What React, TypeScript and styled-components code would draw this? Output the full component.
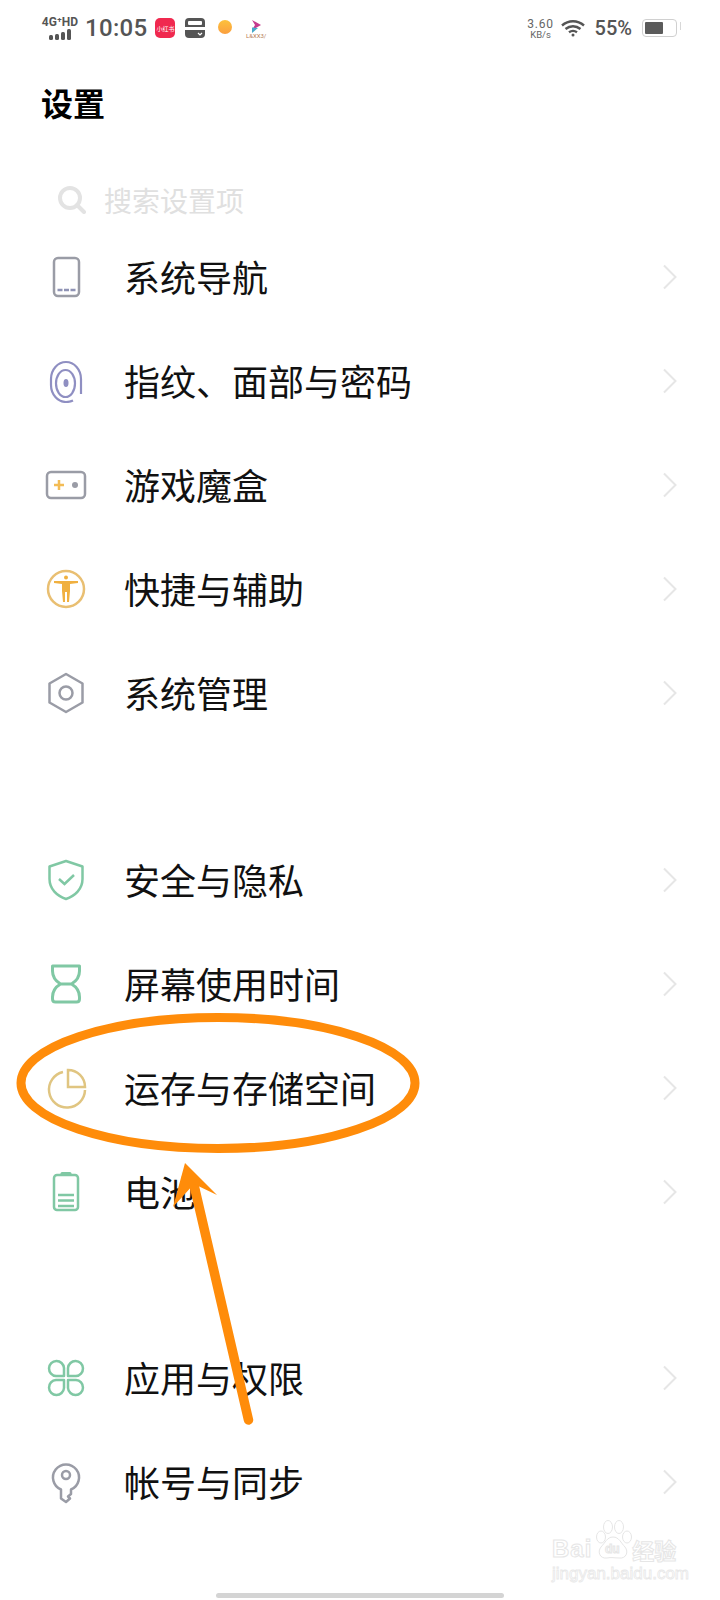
import { FC, ReactNode } from 'react'
import styled, { createGlobalStyle } from 'styled-components'

const GlobalStyle = createGlobalStyle`
  html, body {
    margin: 0;
    padding: 0;
    background: #fff;
  }
  body {
    font-family: "Noto Sans CJK SC", Roboto, sans-serif;
  }
`

const Page = styled.div`
  position: relative;
  width: 720px;
  height: 1600px;
  overflow: hidden;
  background: #fff;
  display: flex;
  flex-direction: column;
`

const StatusBar = styled.div`
  height: 56px;
  padding: 0 43px 0 42px;
  display: flex;
  align-items: center;
  justify-content: space-between;
  font-family: Roboto, sans-serif;
  color: #555;
`

const StatusGroup = styled.div<{ $gap: number }>`
  display: flex;
  align-items: center;
  gap: ${(p) => p.$gap}px;
`

const Network = styled.div`
  width: 36px;
  display: flex;
  flex-direction: column;
  align-items: flex-end;
  gap: 1px;
`

const NetworkLabel = styled.span`
  font-size: 12px;
  line-height: 11px;
  font-weight: 700;
  white-space: nowrap;
`

const SignalBars = styled.svg`
  margin-right: 5px;
  fill: #555;
`

const Clock = styled.span`
  font-size: 24px;
  line-height: 28px;
  font-weight: 500;
  letter-spacing: 0.3px;
  margin-right: 1px;
`

const RedBook = styled.div`
  width: 20px;
  height: 20px;
  margin-right: 3px;
  border-radius: 5px;
  background: #f0294f;
  color: #fff;
  font-size: 6px;
  display: flex;
  align-items: center;
  justify-content: center;
  white-space: nowrap;
  font-family: "Noto Sans CJK SC", sans-serif;
`

const Speed = styled.div`
  display: flex;
  flex-direction: column;
  align-items: center;
  width: 26px;
  margin-right: -3px;
  color: #666;
`

const SpeedValue = styled.span`
  font-size: 12px;
  line-height: 12px;
  letter-spacing: 0.8px;
`

const SpeedUnit = styled.span`
  font-size: 9.5px;
  line-height: 9px;
`

const Percent = styled.span`
  font-size: 20px;
  line-height: 24px;
  font-weight: 500;
`

const BatteryShell = styled.div`
  position: relative;
  width: 29px;
  height: 12px;
  padding: 2px;
  border: 1.5px solid #d0d0d0;
  border-radius: 4px;
  display: flex;

  &::after {
    content: '';
    position: absolute;
    right: -5px;
    top: 2px;
    width: 1.5px;
    height: 8px;
    background: #d8d8d8;
  }
`

const BatteryLevel = styled.div`
  width: 62%;
  background: #5b5b5b;
  border-radius: 1px;
`

const Title = styled.h1`
  margin: 27px 0 0 41px;
  height: 38px;
  font-size: 32px;
  line-height: 38px;
  font-weight: 700;
  color: #000;
`

const Search = styled.div`
  margin-top: 54px;
  height: 50px;
  padding-left: 58px;
  display: flex;
  align-items: center;
  gap: 18px;
`

const SearchText = styled.span`
  font-size: 28px;
  line-height: 50px;
  color: #e0e0e0;
`

const Section = styled.div<{ $gap?: number }>`
  margin-top: ${(p) => p.$gap ?? 0}px;
  display: flex;
  flex-direction: column;
`

const RowWrap = styled.div`
  height: 104px;
  padding: 0 42px 0 44px;
  display: flex;
  align-items: center;
`

const RowIcon = styled.svg`
  width: 44px;
  height: 44px;
  flex: none;
  fill: none;
`

const RowLabel = styled.span`
  margin: 0 0 2px 36px;
  flex: 1;
  font-size: 36px;
  line-height: 44px;
  color: #111;
  white-space: nowrap;
`

const Chevron = styled.svg`
  width: 16px;
  height: 26px;
  flex: none;
  fill: none;
  stroke: #e6e6e6;
  stroke-width: 2;
`

const Annotation = styled.svg`
  position: absolute;
  left: 0;
  top: 0;
  width: 720px;
  height: 1600px;
  pointer-events: none;
`

const HomeBar = styled.div`
  position: absolute;
  left: 216px;
  bottom: 2px;
  width: 288px;
  height: 5px;
  border-radius: 3px;
  background: #d4d4d4;
`

const Watermark = styled.div`
  position: absolute;
  left: 552px;
  top: 1520px;
  width: 132px;
  color: #fff;
  -webkit-text-stroke: 1px #e6e6e6;
  font-family: "Liberation Sans", sans-serif;
`

const WatermarkTop = styled.div`
  display: flex;
  align-items: flex-end;
  height: 42px;
`

const WatermarkBai = styled.span`
  font-size: 24px;
  line-height: 26px;
  font-weight: 700;
  letter-spacing: 1px;
`

const WatermarkCn = styled.span`
  font-size: 22px;
  line-height: 26px;
  font-weight: 700;
  font-family: "Noto Sans CJK SC", sans-serif;
`

const WatermarkPaw = styled.svg`
  width: 44px;
  height: 42px;
  flex: none;
  margin: 0 -3px 0 -1px;
`

const WatermarkUrl = styled.div`
  margin-top: 3px;
  font-size: 17px;
  line-height: 18px;
  white-space: nowrap;
  -webkit-text-stroke: 0.8px #e8e8e8;
`

const gray = '#9a9ca6'
const green = '#80c8a4'
const yellow = '#e9bf72'

const Row: FC<{ label: string; children: ReactNode }> = ({ label, children }) => (
  <RowWrap>
    <RowIcon viewBox="0 0 44 44">{children}</RowIcon>
    <RowLabel>{label}</RowLabel>
    <Chevron viewBox="0 0 16 26">
      <path d="M2 1.5 13.5 13 2 24.5" />
    </Chevron>
  </RowWrap>
)

export default function App() {
  return (
    <Page>
      <GlobalStyle />
      <StatusBar>
        <StatusGroup $gap={7}>
          <Network>
            <NetworkLabel>4G⁺HD</NetworkLabel>
            <SignalBars width="24" height="11" viewBox="0 0 24 11">
              <rect x="0" y="6" width="4" height="5" rx="1.5" />
              <rect x="6" y="5" width="4" height="6" rx="1.5" />
              <rect x="12" y="3" width="4" height="8" rx="1.5" />
              <rect x="18" y="0" width="4" height="11" rx="1.5" />
            </SignalBars>
          </Network>
          <Clock>10:05</Clock>
          <RedBook>小红书</RedBook>
          <svg width="20" height="20" viewBox="0 0 20 20">
            <rect width="20" height="20" rx="4" fill="#555" />
            <rect x="3" y="3" width="14" height="4" rx="1" fill="#fff" />
            <rect x="0" y="9" width="20" height="3" fill="#fff" />
            <path d="M13 15l2 2 2-2" stroke="#fff" strokeWidth="1.2" fill="none" />
          </svg>
          <svg width="26" height="20" viewBox="0 0 26 20">
            <defs>
              <linearGradient id="dot" x1="0" y1="0" x2="0" y2="1">
                <stop offset="0" stopColor="#fdc13c" />
                <stop offset="1" stopColor="#fb9f3f" />
              </linearGradient>
            </defs>
            <circle cx="13" cy="9" r="7" fill="url(#dot)" />
          </svg>
          <svg width="24" height="24" viewBox="0 0 24 24">
            <path d="M7 4l9 5-9 5 3-5z" fill="#c63a8e" />
            <path d="M7 11.500l6 .5-6 5z" fill="#47a7c9" />
            <text x="1" y="22" fontSize="6" fill="#b77b55" fontFamily="Roboto, sans-serif">
              L&amp;XX3/
            </text>
          </svg>
        </StatusGroup>
        <StatusGroup $gap={10}>
          <Speed>
            <SpeedValue>3.60</SpeedValue>
            <SpeedUnit>KB/s</SpeedUnit>
          </Speed>
          <svg width="24" height="18" viewBox="0 0 24 18" fill="none" stroke="#555" strokeWidth="2.4">
            <path d="M1 6.5C7.5.8 16.500.8 23 6.500" />
            <path d="M4.500 10C9 6.300 15 6.300 19.500 10" />
            <path d="M8 13.300c2.500-1.800 5.500-1.800 8 0" />
            <circle cx="12" cy="16" r="1.500" fill="#555" stroke="none" />
          </svg>
          <Percent>55%</Percent>
          <BatteryShell>
            <BatteryLevel />
          </BatteryShell>
        </StatusGroup>
      </StatusBar>

      <Title>设置</Title>

      <Search>
        <svg width="28" height="28" viewBox="0 0 28 28" fill="none" stroke="#e3e3e3" strokeWidth="4">
          <circle cx="12" cy="12" r="10" />
          <path d="M19 19l7 7" strokeLinecap="round" />
        </svg>
        <SearchText>搜索设置项</SearchText>
      </Search>

      <Section>
        <Row label="系统导航">
          <rect x="10" y="3" width="25" height="38" rx="4" stroke={gray} strokeWidth="2.500" />
          <path d="M13.500 35h18" stroke="#8f93b5" strokeWidth="2.500" strokeDasharray="5 1.500" />
        </Row>
        <Row label="指纹、面部与密码">
          <path
            d="M37 35V20A15 17 0 0 0 7 20v6a15 17 0 0 0 15 17c3 0 5-.5 7-1.500"
            stroke="#8f8fc2"
            strokeWidth="2.200"
          />
          <ellipse cx="21.500" cy="24.500" rx="9.500" ry="13.500" stroke="#8f8fc2" strokeWidth="2.200" />
          <ellipse cx="22" cy="24" rx="2.500" ry="4" fill="#8f8fc2" />
        </Row>
        <Row label="游戏魔盒">
          <rect x="3" y="9" width="38" height="26" rx="4" stroke={gray} strokeWidth="2.500" />
          <path d="M15 17v10M10 22h10" stroke="#f3bc55" strokeWidth="2.500" />
          <circle cx="31" cy="22" r="3" fill={gray} />
        </Row>
        <Row label="快捷与辅助">
          <circle cx="22" cy="22" r="18" stroke={yellow} strokeWidth="2.500" />
          <circle cx="22" cy="10.500" r="2" fill="#f0b040" />
          <path
            d="M10 14h24v2l-8 1v7l-1 11h-2V25h-2v10h-2l-1-11v-7l-8-1z"
            fill="#f0b040"
          />
        </Row>
        <Row label="系统管理">
          <path
            d="M22 3 38.500 12.500v19L22 41 5.500 31.500v-19z"
            stroke={gray}
            strokeWidth="2.500"
            strokeLinejoin="round"
          />
          <circle cx="22" cy="22" r="6.500" stroke={gray} strokeWidth="2.500" />
        </Row>
      </Section>

      <Section $gap={83}>
        <Row label="安全与隐私">
          <path
            d="M22 3 38.500 8.500V21C38.500 31 31 38 22 41 13 38 5.500 31 5.500 21V8.500z"
            stroke={green}
            strokeWidth="2.500"
            strokeLinejoin="round"
          />
          <path d="M15 21l5.500 5L30 17" stroke={green} strokeWidth="2.500" />
        </Row>
        <Row label="屏幕使用时间">
          <path
            d="M8.500 4h27v5c0 6-3 10-8 13 5 3 8 7 8 13v2c0 2-1 3-3 3H11.500c-2 0-3-1-3-3v-2c0-6 3-10 8-13-5-3-8-7-8-13zM16.500 22h11"
            stroke={green}
            strokeWidth="3"
            strokeLinejoin="round"
          />
        </Row>
        <Row label="运存与存储空间">
          <path
            d="M19 6A18 18 0 1 0 41 24"
            stroke="#e0c581"
            strokeWidth="2.500"
          />
          <path d="M24 4a17 17 0 0 1 17 17H24z" stroke="#e0c581" strokeWidth="2.500" />
        </Row>
        <Row label="电池">
          <path d="M18 3.500h8" stroke={green} strokeWidth="3" strokeLinecap="round" />
          <rect x="10" y="5" width="24" height="35" rx="3" stroke={green} strokeWidth="2.500" />
          <path d="M14 25h16M14 30.500h16M14 36h16" stroke={green} strokeWidth="2.500" />
        </Row>
      </Section>

      <Section $gap={82}>
        <Row label="应用与权限">
          <path
            d="M20 20h-8a7.500 7.500 0 1 1 8-8zM24 20h8a7.500 7.500 0 1 0-8-8zM20 24h-8a7.500 7.500 0 1 0 8 8zM24 24h8a7.500 7.500 0 1 1-8 8z"
            stroke={green}
            strokeWidth="2.500"
            strokeLinejoin="round"
          />
        </Row>
        <Row label="帐号与同步">
          <path
            d="M17 29.500A13 13 0 1 1 27 29.500V34l-3 2.500 2 2-4 3.500-5-3.500z"
            stroke={gray}
            strokeWidth="2.500"
            strokeLinejoin="round"
          />
          <circle cx="22" cy="15" r="4" stroke={gray} strokeWidth="2.500" />
        </Row>
      </Section>

      <Watermark>
        <WatermarkTop>
          <WatermarkBai>Bai</WatermarkBai>
          <WatermarkPaw viewBox="0 0 44 42" fill="#fff" stroke="#e6e6e6" strokeWidth="1">
            <ellipse cx="10" cy="17" rx="4.500" ry="6" />
            <ellipse cx="17" cy="7" rx="4.500" ry="6.500" />
            <ellipse cx="28" cy="7" rx="4.500" ry="6.500" />
            <ellipse cx="36" cy="17" rx="4.500" ry="6" />
            <path d="M22 17c6 0 8 6 12 10 4 5 1 12-6 11-4 0-8-1-12 0-7 1-10-6-6-11 4-4 6-10 12-10z" />
            <text x="14" y="33" fontSize="12" fontFamily="Liberation Sans, sans-serif" fontWeight="700">
              du
            </text>
          </WatermarkPaw>
          <WatermarkCn>经验</WatermarkCn>
        </WatermarkTop>
        <WatermarkUrl>jingyan.baidu.com</WatermarkUrl>
      </Watermark>

      <HomeBar />

      <Annotation viewBox="0 0 720 1600" fill="none">
        <ellipse cx="218" cy="1083" rx="197" ry="65.500" stroke="#ff8c0a" strokeWidth="9" />
        <path d="M248.500 1420 194 1185" stroke="#ff8c0a" strokeWidth="9.500" strokeLinecap="round" />
        <path d="M185 1163 217 1195 194 1184 173 1207z" fill="#ff8c0a" />
      </Annotation>
    </Page>
  )
}
